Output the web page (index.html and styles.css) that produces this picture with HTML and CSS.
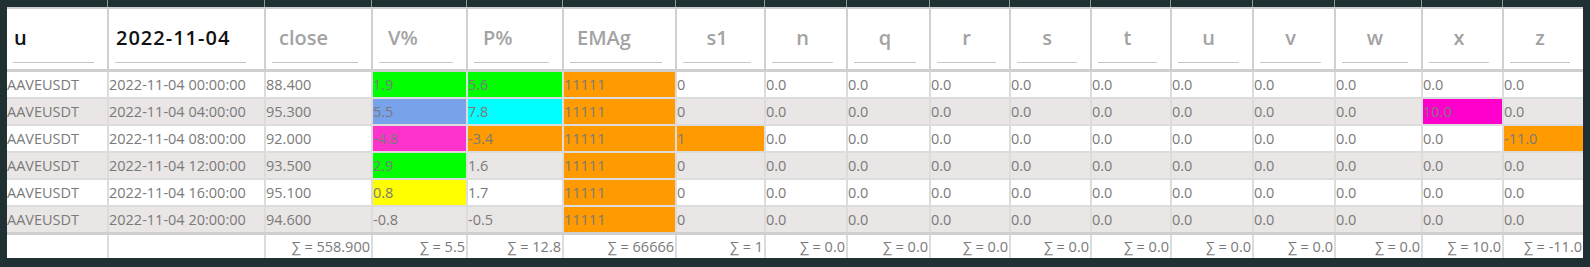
FILE: index.html
```html
<!DOCTYPE html>
<html>
<head>
<meta charset="utf-8">
<link rel="stylesheet" href="styles.css">
</head>
<body>
<div class="frame">
  <div class="row cap">
    <div></div><div></div><div></div><div></div><div></div><div></div><div></div><div></div><div></div><div></div><div></div><div></div><div></div><div></div><div></div><div></div><div></div>
  </div>
  <div class="row head">
    <div class="hcell"><div class="hinput val">u</div></div>
    <div class="hcell wide"><div class="hinput val date">2022-11-04</div></div>
    <div class="hcell"><div class="hinput ph">close</div></div>
    <div class="hcell"><div class="hinput ph indent">V%</div></div>
    <div class="hcell"><div class="hinput ph indent">P%</div></div>
    <div class="hcell"><div class="hinput ph">EMAg</div></div>
    <div class="hcell"><div class="hinput ph mid">s1</div></div>
    <div class="hcell"><div class="hinput ph mid">n</div></div>
    <div class="hcell"><div class="hinput ph mid">q</div></div>
    <div class="hcell"><div class="hinput ph mid">r</div></div>
    <div class="hcell"><div class="hinput ph mid">s</div></div>
    <div class="hcell"><div class="hinput ph mid">t</div></div>
    <div class="hcell"><div class="hinput ph mid">u</div></div>
    <div class="hcell"><div class="hinput ph mid">v</div></div>
    <div class="hcell"><div class="hinput ph mid">w</div></div>
    <div class="hcell"><div class="hinput ph mid">x</div></div>
    <div class="hcell"><div class="hinput ph mid">z</div></div>
  </div>

  <div class="row data">
    <div>AAVEUSDT</div><div>2022-11-04 00:00:00</div><div>88.400</div>
    <div class="green">1.9</div><div class="green">5.6</div><div class="orange">11111</div><div>0</div>
    <div>0.0</div><div>0.0</div><div>0.0</div><div>0.0</div><div>0.0</div><div>0.0</div><div>0.0</div><div>0.0</div><div>0.0</div><div>0.0</div>
  </div>
  <div class="row data alt">
    <div>AAVEUSDT</div><div>2022-11-04 04:00:00</div><div>95.300</div>
    <div class="blue">5.5</div><div class="cyan">7.8</div><div class="orange">11111</div><div>0</div>
    <div>0.0</div><div>0.0</div><div>0.0</div><div>0.0</div><div>0.0</div><div>0.0</div><div>0.0</div><div>0.0</div><div class="magenta">10.0</div><div>0.0</div>
  </div>
  <div class="row data">
    <div>AAVEUSDT</div><div>2022-11-04 08:00:00</div><div>92.000</div>
    <div class="pink">-4.8</div><div class="orange">-3.4</div><div class="orange">11111</div><div class="orange">1</div>
    <div>0.0</div><div>0.0</div><div>0.0</div><div>0.0</div><div>0.0</div><div>0.0</div><div>0.0</div><div>0.0</div><div>0.0</div><div class="orange">-11.0</div>
  </div>
  <div class="row data alt">
    <div>AAVEUSDT</div><div>2022-11-04 12:00:00</div><div>93.500</div>
    <div class="green">2.9</div><div>1.6</div><div class="orange">11111</div><div>0</div>
    <div>0.0</div><div>0.0</div><div>0.0</div><div>0.0</div><div>0.0</div><div>0.0</div><div>0.0</div><div>0.0</div><div>0.0</div><div>0.0</div>
  </div>
  <div class="row data">
    <div>AAVEUSDT</div><div>2022-11-04 16:00:00</div><div>95.100</div>
    <div class="yellow">0.8</div><div>1.7</div><div class="orange">11111</div><div>0</div>
    <div>0.0</div><div>0.0</div><div>0.0</div><div>0.0</div><div>0.0</div><div>0.0</div><div>0.0</div><div>0.0</div><div>0.0</div><div>0.0</div>
  </div>
  <div class="row data alt last">
    <div>AAVEUSDT</div><div>2022-11-04 20:00:00</div><div>94.600</div>
    <div>-0.8</div><div>-0.5</div><div class="orange">11111</div><div>0</div>
    <div>0.0</div><div>0.0</div><div>0.0</div><div>0.0</div><div>0.0</div><div>0.0</div><div>0.0</div><div>0.0</div><div>0.0</div><div>0.0</div>
  </div>

  <div class="row foot">
    <div></div><div></div><div>∑ = 558.900</div>
    <div>∑ = 5.5</div><div>∑ = 12.8</div><div>∑ = 66666</div><div>∑ = 1</div>
    <div>∑ = 0.0</div><div>∑ = 0.0</div><div>∑ = 0.0</div><div>∑ = 0.0</div><div>∑ = 0.0</div><div>∑ = 0.0</div><div>∑ = 0.0</div><div>∑ = 0.0</div><div>∑ = 10.0</div><div>∑ = -11.0</div>
  </div>
</div>
</body>
</html>
```

FILE: styles.css
```css
* { box-sizing: border-box; }

html, body {
  margin: 0;
  padding: 0;
  background: #1f3133;
}

body {
  width: 1590px;
  height: 267px;
  overflow: hidden;
  font-family: "Open Sans", "DejaVu Sans", sans-serif;
}

.frame {
  padding: 0 7px 9px 7px;
  width: 1590px;
}

.row {
  display: grid;
  grid-template-columns: 100px 157px 107px 95px 96px 113px 89px 82px 83px 80px 81px 80px 82px 82px 87px 81px 81px;
}

.row > div {
  min-width: 0;
  overflow: hidden;
  white-space: nowrap;
}

.row > div + div {
  border-left: 2px solid #dcdcdc;
}

/* dark cap above header */
.cap { height: 7px; }
.cap > div + div { border-left: 1px solid #8d9899; }

/* header */
.head {
  background: #fff;
  border-top: 2px solid #cfcfcf;
  border-bottom: 3px solid #cfcfcf;
  height: 65px;
}
.head > div + div { border-left-color: #d0d0d0; }

.hcell {
  padding: 0 13px 0 6px;
  height: 60px;
}
.hcell.wide { padding-right: 18px; }

.hinput {
  height: 54px;
  padding-top: 15px;
  line-height: 28px;
  font-size: 20px;
  font-weight: 600;
  border-bottom: 1px solid #c6c6c6;
  overflow: hidden;
  white-space: nowrap;
}
.hinput.val { color: #111; padding-left: 1px; }
.hinput.date { letter-spacing: 1px; }
.hinput.ph { color: #a3a3a3; padding-left: 7px; }
.hinput.indent { padding-left: 9px; }
.hinput.mid { text-align: center; padding-left: 0; }

/* data rows */
.data {
  background: #fff;
  border-bottom: 2px solid #dcdcdc;
  height: 27px;
  font-size: 14.5px;
  color: #7a7a7a;
}
.data > div {
  line-height: 25px;
  height: 25px;
  padding-left: 0;
}
.data.alt { background: #e9e6e5; }
.data.last { border-bottom: none; height: 25px; }

.green { background: #00ff00; }
.blue { background: #78a2e9; }
.cyan { background: #00ffff; }
.orange { background: #ff9a00; }
.pink { background: #ff33cc; }
.magenta { background: #ff00cc; }
.yellow { background: #ffff00; }

/* footer */
.foot {
  background: #fff;
  border-top: 3px solid #cfcfcf;
  height: 26px;
  font-size: 14.5px;
  color: #7a7a7a;
}
.foot > div {
  line-height: 23px;
  height: 23px;
  text-align: right;
  padding-right: 1px;
}
```
